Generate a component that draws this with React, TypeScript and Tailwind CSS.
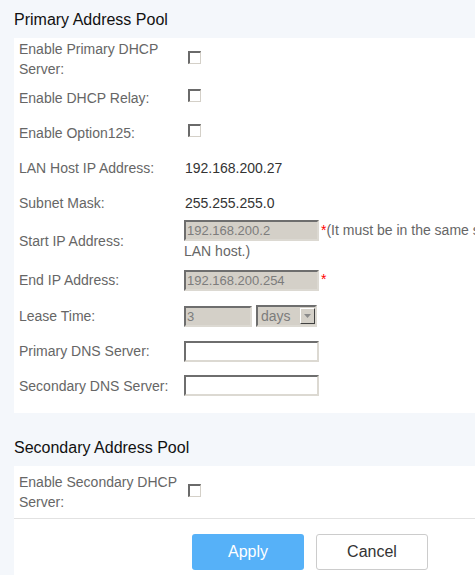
import React from "react";

const inset =
  "border-2 border-t-[#6e6e6e] border-l-[#6e6e6e] border-r-[#dcd9d2] border-b-[#dcd9d2]";

function Checkbox() {
  return (
    <span
      className={`ml-[4px] inline-block w-[13px] h-[13px] bg-white border-t-2 border-l-2 border-r border-b border-t-[#6a6a6a] border-l-[#6a6a6a] border-r-[#d4d0c8] border-b-[#d4d0c8]`}
    />
  );
}

function Row({
  label,
  h,
  children,
}: {
  label: React.ReactNode;
  h: string;
  children?: React.ReactNode;
}) {
  return (
    <div className={`flex items-center ${h}`}>
      <div className="w-[170px] shrink-0 pl-[5px] pr-[3px] text-[14px] leading-[20px] text-[#666666]">
        {label}
      </div>
      <div className="flex-1 text-[14px] text-[#333333]">{children}</div>
    </div>
  );
}

function TextBox({
  value,
  w,
  disabled,
}: {
  value?: string;
  w: string;
  disabled?: boolean;
}) {
  return (
    <span
      className={`inline-flex items-center align-top h-[21px] ${w} ${inset} ${
        disabled ? "bg-[#d4d0c8]" : "bg-white"
      } pl-[1px] text-[13px] leading-[17px] text-[#7c7c7c]`}
    >
      {value}
    </span>
  );
}

export default function App() {
  return (
    <div className="w-[475px] h-[575px] overflow-hidden bg-[#f4f7fb] font-['Liberation_Sans',Arial,sans-serif]">
      <div className="w-[600px] pl-[14px]">
        <div className="h-[38px] flex items-center pt-[1px] text-[16px] text-[#111111]">
          Primary Address Pool
        </div>
        <div className="bg-white pb-[10px]">
          <Row label={<>Enable Primary DHCP Server:</>} h="h-[42px]">
            <Checkbox />
          </Row>
          <Row label="Enable DHCP Relay:" h="h-[35px]">
            <Checkbox />
          </Row>
          <Row label="Enable Option125:" h="h-[35px]">
            <Checkbox />
          </Row>
          <Row label="LAN Host IP Address:" h="h-[36px]">
            <span className="pl-[1px]">192.168.200.27</span>
          </Row>
          <Row label="Subnet Mask:" h="h-[34px]">
            <span className="pl-[1px]">255.255.255.0</span>
          </Row>
          <Row label="Start IP Address:" h="h-[42px]">
            <div className="w-[400px] leading-[21px] text-[#666666]">
              <TextBox value="192.168.200.2" w="w-[135px]" disabled />
              <span className="text-[#ff0000] pl-[2px]">*</span>
              (It must be in the same subnet with the LAN host.)
            </div>
          </Row>
          <Row label="End IP Address:" h="h-[36px]">
            <div className="flex items-start">
              <TextBox value="192.168.200.254" w="w-[135px]" disabled />
              <span className="text-[#ff0000] pl-[2px] leading-[18px]">*</span>
            </div>
          </Row>
          <Row label="Lease Time:" h="h-[36px]">
            <div className="flex items-center gap-[4px]">
              <TextBox value="3" w="w-[68px]" disabled />
              <span
                className={`flex items-center justify-between h-[22px] w-[61px] ${inset} bg-[#d4d0c8] pl-[3px] text-[14px] text-[#7c7c7c]`}
              >
                days
                <span className="flex items-center justify-center w-[15px] h-[16px] bg-[#d4d0c8] border border-t-white border-l-white border-r-[#404040] border-b-[#404040]">
                  <svg width="7" height="4" viewBox="0 0 7 4">
                    <path d="M0 0h7L3.5 4z" fill="#8a8a8a" />
                  </svg>
                </span>
              </span>
            </div>
          </Row>
          <Row label="Primary DNS Server:" h="h-[34px]">
            <TextBox w="w-[135px]" />
          </Row>
          <Row label="Secondary DNS Server:" h="h-[35px]">
            <TextBox w="w-[135px]" />
          </Row>
        </div>
        <div className="h-[53px] flex items-end pb-[6px] text-[16px] text-[#111111]">
          Secondary Address Pool
        </div>
        <div className="bg-white">
          <div className="border-b border-[#e2e2e2]">
            <Row label="Enable Secondary DHCP Server:" h="h-[52px]">
              <Checkbox />
            </Row>
          </div>
          <div className="flex gap-[12px] pl-[178px] pt-[15px] pb-[10px]">
            <button className="w-[112px] h-[36px] rounded-[3px] bg-[#56b1f8] text-white text-[16px]">
              Apply
            </button>
            <button className="w-[112px] h-[36px] rounded-[3px] bg-white border border-[#cccccc] text-[#333333] text-[16px]">
              Cancel
            </button>
          </div>
        </div>
      </div>
    </div>
  );
}
